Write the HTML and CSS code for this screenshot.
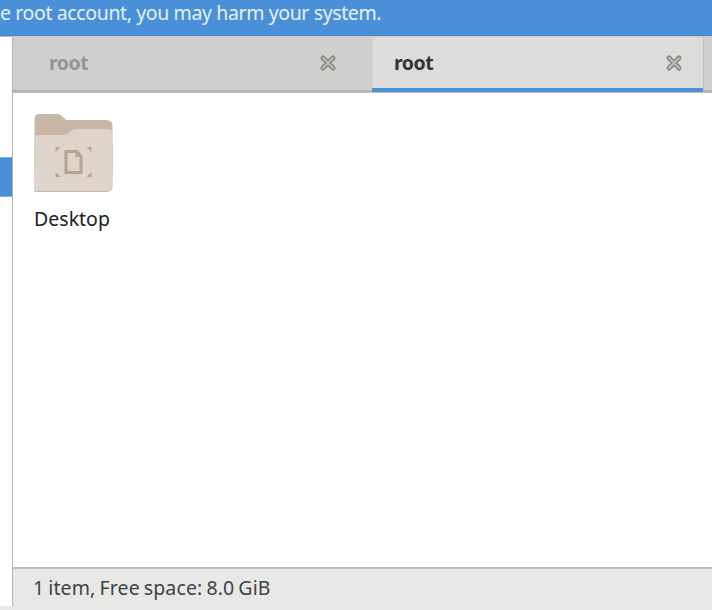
FILE: index.html
```
<!DOCTYPE html>
<html lang="en">
<head>
<meta charset="utf-8">
<title>root</title>
<link rel="stylesheet" href="styles.css">
</head>
<body>
<div class="window">
  <div class="banner"><span class="banner-text">e root account, you may harm your system.</span></div>
  <div class="body">
    <aside class="sidebar"><div class="selected"></div></aside>
    <main class="main">
      <div class="tabs">
        <div class="tab first">
          <span class="tab-label">root</span>
          <svg class="close" viewBox="0 0 18 18"><path class="outer" d="M4 4L14 14M14 4L4 14"/><path class="inner" d="M4 4L14 14M14 4L4 14"/></svg>
        </div>
        <div class="tab active">
          <span class="tab-label">root</span>
          <svg class="close" viewBox="0 0 18 18"><path class="outer" d="M4 4L14 14M14 4L4 14"/><path class="inner" d="M4 4L14 14M14 4L4 14"/></svg>
        </div>
        <div class="tab rest"></div>
      </div>
      <div class="files">
        <div class="file">
          <svg class="folder" viewBox="0 0 80 80">
            <path fill="#c8b7a7" d="M1.500 60V6Q1.500 1 6.500 1H24Q27 1 29 3L33 7H73Q79.500 7 79.500 13V60Z"/>
            <path fill="#c7baad" d="M1.500 30V79H73Q79.500 79 79.500 73V30Z"/>
            <path fill="#dfd4ca" d="M1.500 78V26Q1.500 22 6 22H31Q34 22 36 20L38 18Q40 16 43 16H74Q79.500 16 79.500 21V72Q79.500 78 73 78Z"/>
            <path fill="#b9a28f" d="M22.500 34H27.500L22.500 39ZM53.500 34H58.500V39ZM22.500 64H27.500L22.500 59ZM53.500 64H58.500V59Z"/>
            <path fill="none" stroke="#b9a28f" stroke-width="3" d="M33 38.500H43.500L48 43V59.500H33Z"/>
            <path fill="#b9a28f" d="M42.500 38V44H48.500Z"/>
          </svg>
          <span class="file-name">Desktop</span>
        </div>
      </div>
      <div class="status"><span class="status-text">1 item, Free space: 8.0 GiB</span></div>
    </main>
  </div>
</div>
</body>
</html>
```
FILE: styles.css
```
* { box-sizing: border-box; }
body { margin: 0; background: #e8e8e7; font: 19.5px/26px "Noto Sans", "Open Sans", sans-serif; }
.window { width: 712px; height: 610px; overflow: hidden; display: flex; flex-direction: column; white-space: nowrap; }
.banner { height: 36px; flex: none; background: #4a90d9; color: #e6f0fa; border-bottom: 1px solid #4789cd; }
.banner-text { display: block; letter-spacing: -0.38px; }
.body { flex: 1; display: flex; min-height: 0; }
.sidebar { width: 13px; height: 570px; flex: none; background: #fff; border-right: 1px solid #b2b2af; border-top: 1px solid #b8b8b5; padding-top: 120px; }
.selected { height: 40px; background: #4a90d9; border: solid #7fb1e4; border-width: 1px 0; }
.main { flex: 1; min-width: 0; display: flex; flex-direction: column; background: #fff; }
.tabs { height: 57px; flex: none; display: flex; background: #cfcfcd; border-top: 1px solid #c3c8cb; border-bottom: 1px solid #c1c1be; }
.tab { display: flex; align-items: center; justify-content: space-between; border-bottom: 2px solid #b2b3ae; font-weight: 700; color: #929595; }
.first { width: 359px; padding: 0 34px 2px 36px; border-right: 1px solid #c6c6c3; }
.active { width: 331px; padding: 0 20px 0 22px; background: #dcdcda; color: #2e3436; border-bottom: 4px solid #4a90d9; }
.rest { flex: 1; border-left: 1px solid #c3c3c0; }
.tab-label { letter-spacing: -0.5px; padding-top: 1px; }
.close { width: 18px; height: 18px; }
.outer { fill: none; stroke: #858780; stroke-width: 5; stroke-linecap: round; }
.inner { fill: none; stroke: #bcbdb9; stroke-width: 2; stroke-linecap: round; }
.files { flex: 1; padding: 20px; }
.file { width: 80px; display: flex; flex-direction: column; align-items: center; }
.folder { width: 80px; height: 80px; }
.file-name { margin-top: 13px; margin-left: -2px; color: #202020; letter-spacing: 0; }
.status { height: 43px; flex: none; background: #e8e8e7; border-top: 2px solid #bcbcb9; padding: 6px 20px; color: #3c4346; }
.status-text { letter-spacing: 0.13px; word-spacing: -1.2px; }
```
